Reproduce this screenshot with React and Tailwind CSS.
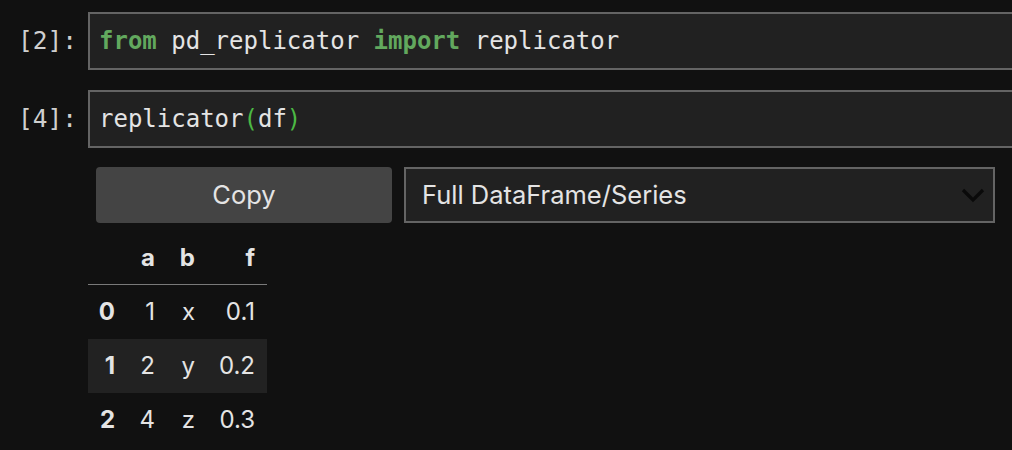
import React from "react";

const mono = { fontFamily: '"DejaVu Sans Mono", "Liberation Mono", monospace' };

function Cell({ n, children, top }) {
  return (
    <div className={`flex items-stretch ${top}`}>
      <div
        className="w-[88px] shrink-0 flex items-center justify-end pr-[11px] text-[24.5px] text-[#cfcfcf]"
        style={mono}
      >
        [{n}]:
      </div>
      <div
        className="w-[960px] shrink-0 h-[58px] border-2 border-[#646464] bg-[#212121] flex items-center pl-[9px] text-[24px] text-[#e4e4e4] whitespace-pre"
        style={mono}
      >
        {children}
      </div>
    </div>
  );
}

export default function App() {
  const rows = [
    ["0", "1", "x", "0.1"],
    ["1", "2", "y", "0.2"],
    ["2", "4", "z", "0.3"],
  ];
  return (
    <div
      className="w-[1012px] h-[450px] overflow-hidden bg-[#111111] text-[#e4e4e4]"
      style={{ fontFamily: 'Inter, "Liberation Sans", sans-serif' }}
    >
      <Cell n={2} top="pt-[12px]">
        <span className="text-[#62a85e] font-bold">from</span> pd_replicator{" "}
        <span className="text-[#62a85e] font-bold">import</span> replicator
      </Cell>
      <Cell n={4} top="pt-[20px]">
        replicator<span className="text-[#4cb944]">(</span>df
        <span className="text-[#4cb944]">)</span>
      </Cell>

      <div className="pl-[96px] pt-[19px] flex gap-[12px]">
        <button className="w-[296px] h-[56px] rounded-[4px] bg-[#444444] text-[25.5px] text-[#e4e4e4] flex items-center justify-center">
          Copy
        </button>
        <div className="w-[591px] h-[56px] border-2 border-[#646464] bg-[#212121] flex items-center justify-between pl-[16px] pr-[8px] text-[25.5px] text-[#e4e4e4]">
          <span>Full DataFrame/Series</span>
          <svg width="24" height="16" viewBox="0 0 24 16">
            <polyline
              points="2,3 12,13 22,3"
              fill="none"
              stroke="#0a0a0a"
              strokeWidth="3.2"
            />
          </svg>
        </div>
      </div>

      <div className="pl-[88px] pt-[9px]">
        <div className="w-[179px] text-[24px]">
          <div className="flex h-[53px] items-center border-b border-[#7a7a7a] font-bold">
            <div className="w-[39px] text-right pr-[12px]"></div>
            <div className="w-[40px] text-right pr-[12px]">a</div>
            <div className="w-[40px] text-right pr-[12px]">b</div>
            <div className="w-[60px] text-right pr-[12px]">f</div>
          </div>
          {rows.map((r, i) => (
            <div
              key={i}
              className={`flex h-[54px] items-center ${i === 1 ? "bg-[#222222]" : ""}`}
            >
              <div className="w-[39px] text-right pr-[12px] font-bold">{r[0]}</div>
              <div className="w-[40px] text-right pr-[12px]">{r[1]}</div>
              <div className="w-[40px] text-right pr-[12px]">{r[2]}</div>
              <div className="w-[60px] text-right pr-[12px]">{r[3]}</div>
            </div>
          ))}
        </div>
      </div>
    </div>
  );
}
